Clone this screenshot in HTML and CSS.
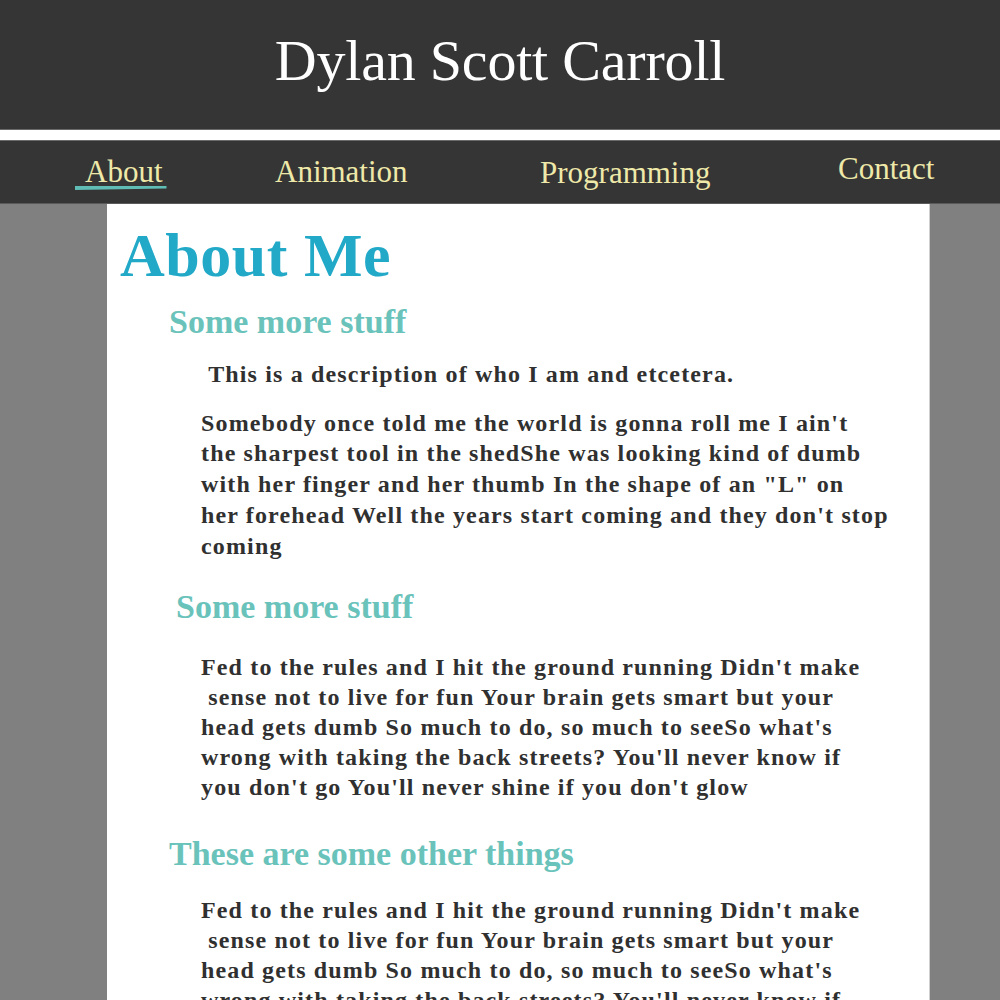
FILE: index.html
```html
<!DOCTYPE html>
<html lang="en">
<head>
<meta charset="utf-8">
<title>Dylan Scott Carroll</title>
<link rel="stylesheet" href="styles.css">
</head>
<body>
<div class="masthead">
  <header class="site-header">
    <h1 class="site-title">Dylan Scott Carroll</h1>
  </header>
  <nav class="site-nav">
    <a class="nav-link nav-about active" href="#">About</a>
    <a class="nav-link nav-animation" href="#">Animation</a>
    <a class="nav-link nav-programming" href="#">Programming</a>
    <a class="nav-link nav-contact" href="#">Contact</a>
  </nav>
</div>
<main class="content">
  <h1 class="page-title">About Me</h1>
  <section class="block block-one">
    <h2 class="block-title">Some more stuff</h2>
    <p class="text text-intro">&nbsp;This is a description of who I am and etcetera.</p>
    <p class="text text-second">Somebody once told me the world is gonna roll me I ain't<br>the sharpest tool in the shedShe was looking kind of dumb<br>with her finger and her thumb In the shape of an "L" on<br>her forehead Well the years start coming and they don't stop<br>coming</p>
  </section>
  <section class="block block-two">
    <h2 class="block-title title-shift">Some more stuff</h2>
    <p class="text text-tight">Fed to the rules and I hit the ground running Didn't make<br>&nbsp;sense not to live for fun Your brain gets smart but your<br>head gets dumb So much to do, so much to seeSo what's<br>wrong with taking the back streets? You'll never know if<br>you don't go You'll never shine if you don't glow</p>
  </section>
  <section class="block block-three">
    <h2 class="block-title">These are some other things</h2>
    <p class="text text-tight">Fed to the rules and I hit the ground running Didn't make<br>&nbsp;sense not to live for fun Your brain gets smart but your<br>head gets dumb So much to do, so much to seeSo what's<br>wrong with taking the back streets? You'll never know if<br>you don't go You'll never shine if you don't glow</p>
  </section>
</main>
</body>
</html>
```
FILE: styles.css
```css
html, body {
  margin: 0;
  padding: 0;
}

body {
  background: #808080;
  font-family: "Liberation Serif", "Times New Roman", serif;
  color: #333333;
}

.masthead {
  background: #ffffff;
  display: flex;
  flex-direction: column;
  gap: 10px;
}

.site-header {
  background: #353535;
  height: 129px;
  border-bottom: 1px solid #6a6a6a;
  box-sizing: content-box;
}

.site-title {
  margin: 0;
  padding-top: 32px;
  font-size: 58px;
  line-height: 58px;
  font-weight: normal;
  color: #ffffff;
  text-align: center;
  letter-spacing: -0.2px;
}

.site-nav {
  background: #353535;
  border-top: 1px solid #6a6a6a;
  border-bottom: 1px solid #5a5a5a;
  height: 62px;
  display: grid;
  grid-template-columns: 190px 265px 298px auto;
  padding-left: 85px;
  align-items: start;
}

.nav-link {
  justify-self: start;
  position: relative;
  color: #efe9a9;
  text-decoration: none;
  font-size: 31px;
  line-height: 62px;
}

.nav-programming {
  margin-top: 1px;
}

.nav-contact {
  margin-top: -3px;
}

.nav-link.active::after {
  content: "";
  position: absolute;
  left: -10px;
  right: -4px;
  bottom: 13px;
  height: 4px;
  background: #5fbdb5;
  clip-path: polygon(0 0, 100% 0, 100% 60%, 0 100%);
}

.content {
  background: #ffffff;
  width: 823px;
  margin-left: 107px;
  border-right: 1px solid #cfcfcf;
  padding: 20px 0 40px 13px;
  box-sizing: border-box;
}

.page-title {
  margin: 0;
  font-size: 62px;
  line-height: 62px;
  font-weight: bold;
  color: #22a9c8;
  letter-spacing: 0.5px;
}

.block-title {
  margin: 0 0 0 49px;
  font-size: 34px;
  line-height: 40px;
  font-weight: bold;
  color: #6ac3bb;
}

.title-shift {
  margin-left: 56px;
}

.block-one .block-title {
  margin-top: 15.5px;
}

.block-two .block-title {
  margin-top: 25.5px;
}

.block-three .block-title {
  margin-top: 32px;
}

.text {
  margin: 0 0 0 81px;
  font-size: 24px;
  font-weight: bold;
  letter-spacing: 1.15px;
  color: #303030;
  white-space: nowrap;
}

.text-intro {
  margin-top: 17px;
  line-height: 31px;
}

.text-second {
  margin-top: 18px;
  line-height: 30.75px;
}

.text-tight {
  line-height: 30px;
}

.block-two .text-tight {
  margin-top: 25px;
}

.block-three .text-tight {
  margin-top: 21px;
}
```
